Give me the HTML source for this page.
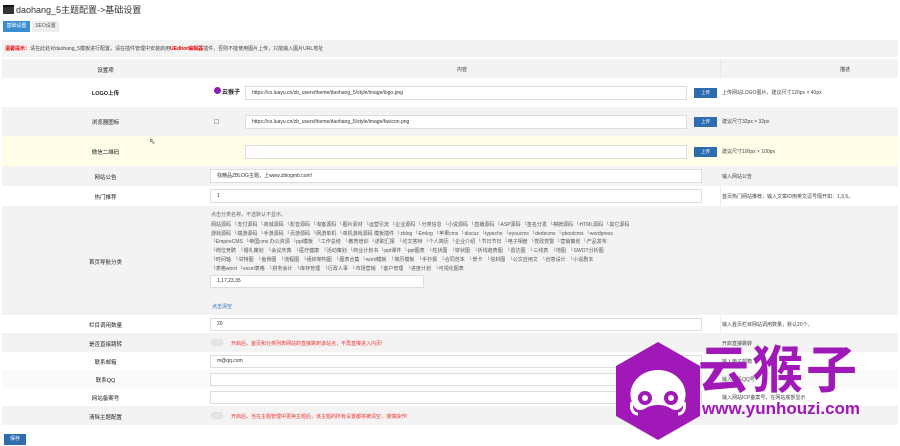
<!DOCTYPE html>
<html><head><meta charset="utf-8"><style>
*{margin:0;padding:0;box-sizing:border-box}
body{width:900px;height:446px;background:#fff;font-family:"Liberation Sans","Noto Sans CJK SC",sans-serif;color:#333;position:relative;overflow:hidden;font-size:5px}
.a{position:absolute}
.row{position:absolute;left:2px;width:896px}
.lab{position:absolute;left:0;width:207px;text-align:center;font-size:5.5px;color:#222}
.inp{position:absolute;background:#fff;border:1px solid #ddd;font-size:5px;padding-left:6px;color:#333}
.btn{position:absolute;background:#2e6cb0;color:#fff;font-size:4.5px;text-align:center;width:23px;height:10px;line-height:10px}
.desc{position:absolute;left:720px;font-size:5px;color:#444}
.sw{position:absolute;width:12px;height:7px;border-radius:4px;background:#e6e6e6;border:1px solid #ddd}
.red{position:absolute;color:#e33;font-size:5px}
.cat{font-size:5px;color:#555;white-space:nowrap;line-height:8.7px}
</style></head><body>
<div class="a" style="left:3px;top:5px;width:11px;height:9px;background:#333;border-top:2px solid #111"></div>
<div class="a" style="left:16px;top:3px;font-size:9px;color:#333">daohang_5主题配置-&gt;基础设置</div>
<div class="a" style="left:3px;top:21px;width:27px;height:11px;background:#3a8ed0;color:#fff;font-size:5px;line-height:11px;text-align:center">基础设置</div>
<div class="a" style="left:32px;top:21px;width:27px;height:11px;background:#eee;color:#555;font-size:5px;line-height:11px;text-align:center">SEO设置</div>

<div class="row" style="top:40px;height:17px;background:#f3f3f3"><div class="a" style="left:3px;top:5px;font-size:5px;color:#444"><span style="color:#e00;font-weight:bold">温馨提示：</span>请在此处对daohang_5模板进行配置，请在插件管理中安装启用<span style="color:#e00;font-weight:bold">UEditor编辑器</span>插件，否则不能使用图片上传，只能输入图片URL地址</div></div>

<div class="row" style="top:59px;height:19px;background:#f3f3f3"><div class="lab" style="top:7px">设置项</div><div class="a" style="left:455px;top:7px;font-size:5px">内容</div><div class="a" style="left:838px;top:7px;font-size:5px">描述</div><div class="a" style="left:718px;top:0;width:1px;height:19px;background:#e8e8e8"></div></div>

<div class="row" style="top:78px;height:29px;background:#fff"><div class="lab" style="top:11px;font-weight:bold">LOGO上传</div>
<div class="a" style="left:212px;top:9px;width:7px;height:7px;border-radius:50%;background:#8a1fb0"></div><div class="a" style="left:220px;top:9px;font-size:6px;font-weight:bold;color:#222">云猴子</div>
<div class="inp" style="left:243px;top:8px;width:442px;height:14px;line-height:12px">https://co.luayu.cn/zb_users/theme/daohang_5/style/image/logo.png</div><div class="btn" style="left:692px;top:10px">上传</div><div class="desc" style="top:11px">上传网站LOGO图片，建议尺寸120px × 40px</div></div>

<div class="row" style="top:107px;height:29px;background:#f3f3f3"><div class="lab" style="top:11px">浏览器图标</div>
<div class="a" style="left:212px;top:12px;width:5px;height:5px;border:1px solid #bbb"></div>
<div class="inp" style="left:243px;top:8px;width:442px;height:14px;line-height:12px">https://co.luayu.cn/zb_users/theme/daohang_5/style/image/favicon.png</div><div class="btn" style="left:692px;top:10px">上传</div><div class="desc" style="top:11px">建议尺寸32px × 32px</div></div>

<div class="row" style="top:136px;height:30px;background:#fffde8"><div class="lab" style="top:12px">微信二维码</div>
<div class="inp" style="left:243px;top:9px;width:442px;height:14px"></div><div class="btn" style="left:692px;top:11px">上传</div><div class="desc" style="top:12px">建议尺寸100px × 100px</div></div>
<div class="a" style="left:149px;top:137px;font-size:8px;color:#555">⇖</div>

<div class="row" style="top:166px;height:20px;background:#f3f3f3"><div class="lab" style="top:7px">网站公告</div>
<div class="inp" style="left:208px;top:3px;width:492px;height:14px;line-height:12px">找精品ZBLOG主题，上www.zblogmb.com!</div><div class="desc" style="top:7px">输入网站公告</div></div>

<div class="row" style="top:186px;height:20px;background:#fff"><div class="lab" style="top:7px">热门推荐</div>
<div class="inp" style="left:208px;top:3px;width:492px;height:14px;line-height:12px">1</div><div class="desc" style="top:7px">首页热门网站推荐，输入文章ID用英文逗号隔开如：1,3,5。</div><div class="a" style="left:718px;top:0;width:1px;height:20px;background:#eee"></div></div>

<div class="row" style="top:206px;height:109px;background:#f3f3f3"><div class="lab" style="top:52px">首页导航分类</div>
<div class="a" style="left:209px;top:5px;font-size:5px;color:#666">点击分类名称，不选默认不显示。</div>
<div class="a cat" style="left:209px;top:15px">
网站源码 &nbsp;└支付源码 &nbsp;└商城源码 &nbsp;└影音源码 &nbsp;└淘客源码 &nbsp;└图片素材 &nbsp;└运营引流 &nbsp;└企业源码 &nbsp;└分类信息 &nbsp;└小说源码 &nbsp;└直播源码 &nbsp;└ASP源码 &nbsp;└签名分发 &nbsp;└棋牌源码 &nbsp;└HTML源码 &nbsp;└其它源码<br>
游戏源码 &nbsp;└端游源码 &nbsp;└手游源码 &nbsp;└页游源码 &nbsp;└网游单机 &nbsp;└单机游戏源码 模板插件 &nbsp;└zblog &nbsp;└Emlog &nbsp;└苹果cms &nbsp;└discuz &nbsp;└typecho &nbsp;└eyoucms &nbsp;└dedecms &nbsp;└pbootcms &nbsp;└wordpress<br>
&nbsp;└EmpireCMS &nbsp;└帝国cms 办公资源 &nbsp;└ppt模板 &nbsp;&nbsp;└工作总结 &nbsp;&nbsp;└教育培训 &nbsp;└述职汇报 &nbsp;&nbsp;└论文答辩 &nbsp;└个人简历 &nbsp;└企业介绍 &nbsp;└节日节日 &nbsp;└电子相册 &nbsp;└党政党警 &nbsp;└营销策划 &nbsp;└产品发布<br>
&nbsp;└岗位竞聘 &nbsp;&nbsp;└婚礼策划 &nbsp;&nbsp;└会议庆典 &nbsp;&nbsp;└医疗健康 &nbsp;&nbsp;└活动策划 &nbsp;└商业计划书 &nbsp;└ppt课件 &nbsp;└ppt图表 &nbsp;&nbsp;└柱状图 &nbsp;&nbsp;└饼状图 &nbsp;&nbsp;└折线趋势图 &nbsp;&nbsp;└雷达图 &nbsp;&nbsp;└三线表 &nbsp;&nbsp;└地图 &nbsp;&nbsp;└SWOT分析图<br>
&nbsp;└时间轴 &nbsp;&nbsp;└甘特图 &nbsp;&nbsp;└鱼骨图 &nbsp;&nbsp;└流程图 &nbsp;&nbsp;└组织架构图 &nbsp;&nbsp;└图表合集 &nbsp;└word模板 &nbsp;&nbsp;└简历模板 &nbsp;&nbsp;└手抄报 &nbsp;&nbsp;└合同范本 &nbsp;&nbsp;└贺卡 &nbsp;&nbsp;└信封图 &nbsp;&nbsp;└公文应用文 &nbsp;&nbsp;└创意设计 &nbsp;&nbsp;└小说剧本<br>
&nbsp;└表格word &nbsp;└excel表格 &nbsp;&nbsp;└财务会计 &nbsp;&nbsp;└库存管理 &nbsp;&nbsp;└行政人事 &nbsp;&nbsp;└市场营销 &nbsp;&nbsp;└客户管理 &nbsp;&nbsp;└进度计划 &nbsp;&nbsp;└可视化图表</div>
<div class="inp" style="left:208px;top:69px;width:214px;height:13px;line-height:11px">1,17,23,35</div>
<div class="a" style="left:210px;top:97px;font-size:5px;color:#2a6bb5">点击清空</div></div>

<div class="row" style="top:315px;height:18px;background:#fff"><div class="lab" style="top:6px">栏目调用数量</div>
<div class="inp" style="left:208px;top:3px;width:492px;height:13px;line-height:11px">20</div><div class="desc" style="top:6px">输入首页栏目网站调用数量，默认20个。</div><div class="a" style="left:718px;top:0;width:1px;height:18px;background:#eee"></div></div>

<div class="row" style="top:333px;height:19px;background:#f3f3f3"><div class="lab" style="top:7px">是否直接跳转</div>
<div class="sw" style="left:209px;top:6px"></div><div class="red" style="left:229px;top:7px">开启后，首页和分类列表网站的直接跳到该站点，不再直接进入内页!</div><div class="desc" style="top:7px">开启直接跳转</div></div>

<div class="row" style="top:352px;height:18px;background:#fff"><div class="lab" style="top:6px">联系邮箱</div>
<div class="inp" style="left:208px;top:3px;width:492px;height:13px;line-height:11px">m@qq.com</div><div class="desc" style="top:6px">输入电子邮箱</div></div>

<div class="row" style="top:370px;height:18px;background:#fafafa"><div class="lab" style="top:6px">联系QQ</div>
<div class="inp" style="left:208px;top:3px;width:492px;height:13px"></div><div class="desc" style="top:6px">输入联系QQ号</div></div>

<div class="row" style="top:388px;height:18px;background:#fff"><div class="lab" style="top:6px">网站备案号</div>
<div class="inp" style="left:208px;top:3px;width:492px;height:13px"></div><div class="desc" style="top:6px">输入网站ICP备案号，在网站底部显示</div></div>

<div class="row" style="top:406px;height:19px;background:#f3f3f3"><div class="lab" style="top:7px">清除主题配置</div>
<div class="sw" style="left:209px;top:6px"></div><div class="red" style="left:229px;top:7px">开启后，当在主题管理中更换主题后，该主题的所有设置都将被清空，谨慎操作!</div></div>

<div class="a" style="left:4px;top:434px;width:22px;height:11px;background:#2e6cb0;color:#fff;font-size:5px;line-height:11px;text-align:center">保存</div>

<svg class="a" style="left:612px;top:340px" width="92" height="102" viewBox="0 0 92 102">
<polygon points="46,2 88,26 88,76 46,100 4,76 4,26" fill="#a018b8"/>
<path d="M20,62 C14,48 26,30 46,30 C66,30 78,48 72,62 C70,70 64,72 58,68 C52,64 40,64 34,68 C28,72 22,70 20,62Z" fill="#fff"/>
<circle cx="33" cy="58" r="7" fill="#a018b8"/><circle cx="59" cy="58" r="7" fill="#a018b8"/>
<circle cx="33" cy="58" r="3" fill="#fff"/><circle cx="59" cy="58" r="3" fill="#fff"/>
<path d="M20,62 C18,70 22,74 26,74" stroke="#fff" stroke-width="3" fill="none"/><path d="M72,62 C74,70 70,74 66,74" stroke="#fff" stroke-width="3" fill="none"/>
</svg>
<div class="a" style="left:698px;top:335px;font-size:51px;font-weight:bold;color:#a018b8;letter-spacing:3px;line-height:62px;font-family:'Noto Sans CJK SC',sans-serif">云猴子</div>
<div class="a" style="left:702px;top:399px;font-size:17px;font-weight:bold;color:#a018b8;line-height:19px">www.yunhouzi.com</div>
</body></html>
